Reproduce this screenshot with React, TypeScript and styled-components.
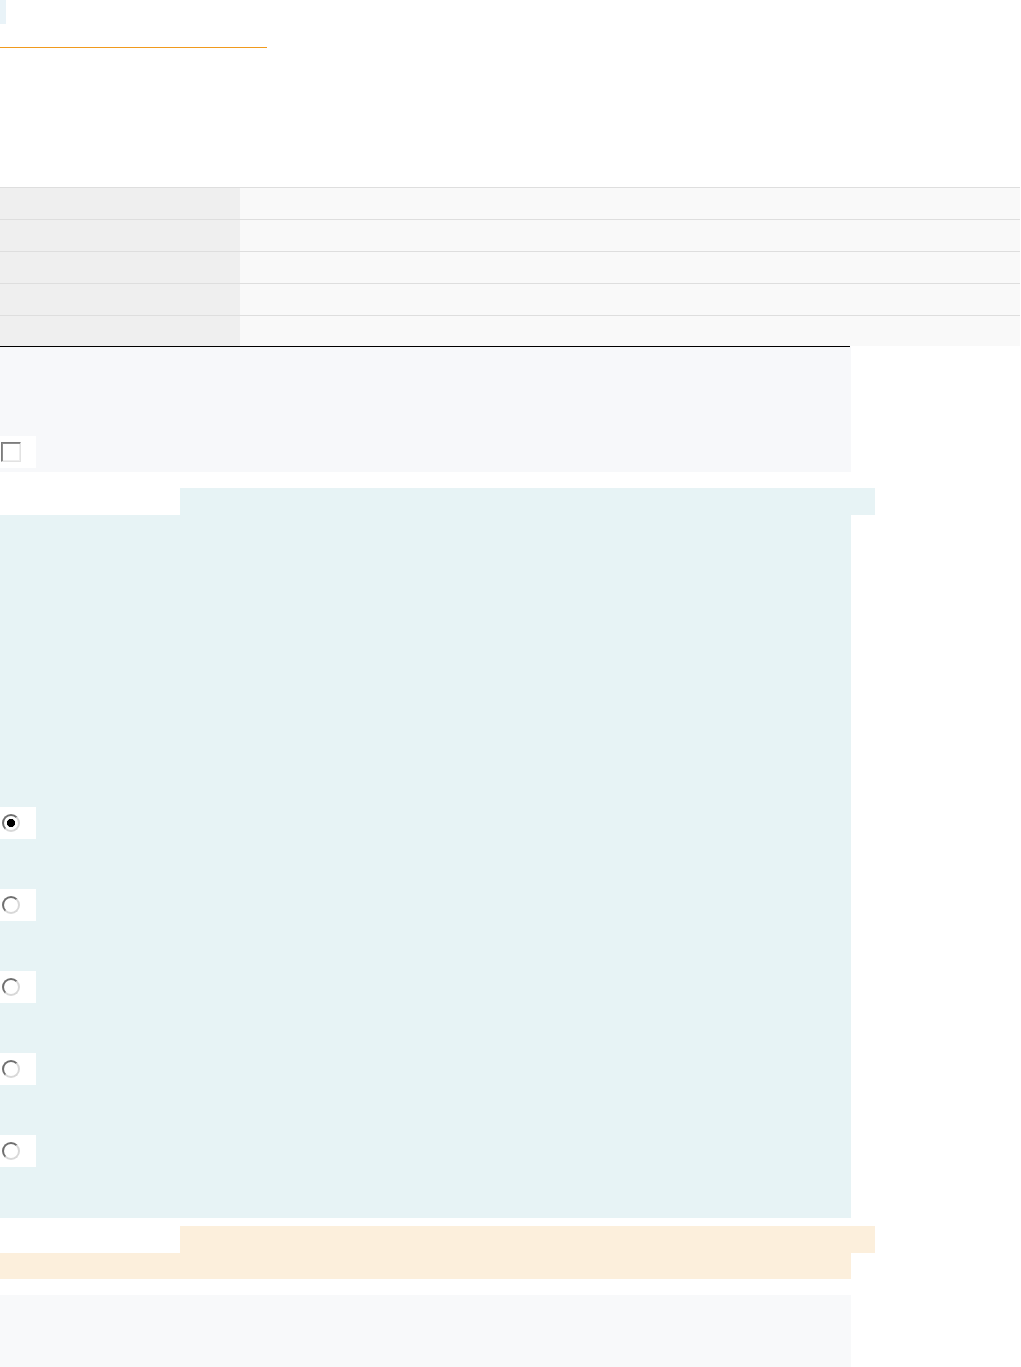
import React from "react";
import styled, { createGlobalStyle } from "styled-components";

const GlobalStyle = createGlobalStyle`
  html, body { margin: 0; padding: 0; background: #ffffff; }
  body { font-family: "Liberation Sans", Arial, sans-serif; font-size: 14px; color: #1d2125; }
  * { box-sizing: border-box; }
`;

const Page = styled.div`
  display: flex;
  flex-direction: column;
  align-items: flex-start;
  width: 1021px;
`;

const SkipLink = styled.a`
  display: block;
  width: 6px;
  height: 24px;
  background: #e9f3f8;
`;

const HeaderRule = styled.div`
  width: 267px;
  height: 1px;
  margin-top: 23px;
  background: #f09a1e;
`;

const SummaryTable = styled.table`
  margin-top: 139px;
  width: 1020px;
  border-collapse: collapse;
  border-spacing: 0;
`;

const Row = styled.tr<{ $last?: boolean }>`
  height: ${(p) => (p.$last ? 30 : 32)}px;
  border-top: 1px solid #dedede;
`;

const HeadCell = styled.th`
  width: 240px;
  padding: 0;
  background: #efefef;
`;

const ValueCell = styled.td`
  padding: 0;
  background: #f9f9f9;
`;

const Divider = styled.div`
  width: 850px;
  height: 1px;
  background: #000000;
`;

const InfoBox = styled.div`
  width: 851px;
  height: 125px;
  padding-top: 89px;
  background: #f7f8fa;
`;

const InputCell = styled.label`
  display: flex;
  align-items: center;
  width: 36px;
  height: 32px;
  padding-left: 1px;
  background: #ffffff;
`;

const FlagBox = styled.input.attrs({ type: "checkbox" })`
  appearance: none;
  margin: 0;
  width: 20px;
  height: 20px;
  background: #ffffff;
  border: 1px solid;
  border-color: #7c7c7c #e2e2e2 #e2e2e2 #7c7c7c;
  box-shadow: inset 1px 1px 0 #8e8e8e, inset -1px -1px 0 #eeeeee;
`;

const Tab = styled.div<{ $tone: string }>`
  width: 695px;
  height: 27px;
  margin-left: 180px;
  margin-top: ${(p) => (p.$tone === "blue" ? 16 : 8)}px;
  background: ${(p) => (p.$tone === "blue" ? "#e7f3f5" : "#fcefdc")};
`;

const Formulation = styled.div`
  width: 851px;
  height: 703px;
  padding-top: 292px;
  display: flex;
  flex-direction: column;
  gap: 50px;
  background: #e7f3f5;
`;

const Choice = styled(InputCell)`
  padding-left: 2px;
`;

const Radio = styled.input.attrs({ type: "radio", name: "answer" })`
  appearance: none;
  margin: 0;
  width: 18px;
  height: 18px;
  border-radius: 50%;
  border: 2px solid;
  border-color: #6f6f6f #d8d8d8 #d8d8d8 #6f6f6f;
  background: #ffffff;
  &:checked {
    background: radial-gradient(circle at center, #000000 0 3.8px, #ffffff 4.4px);
  }
`;

const Outcome = styled.div`
  width: 851px;
  height: 26px;
  background: #fcefdc;
`;

const CommentBox = styled.div`
  width: 851px;
  height: 90px;
  margin-top: 16px;
  background: #f8f9fa;
`;

const rows = [0, 1, 2, 3, 4];
const choices = [true, false, false, false, false];

export default function App() {
  return (
    <>
      <GlobalStyle />
      <Page>
        <SkipLink href="#main" aria-label="Skip to main content" />
        <HeaderRule />
        <SummaryTable>
          <tbody>
            {rows.map((r) => (
              <Row key={r} $last={r === rows.length - 1}>
                <HeadCell scope="row" />
                <ValueCell />
              </Row>
            ))}
          </tbody>
        </SummaryTable>
        <Divider />
        <InfoBox>
          <InputCell aria-label="Flag question">
            <FlagBox />
          </InputCell>
        </InfoBox>
        <Tab $tone="blue" />
        <Formulation>
          {choices.map((c, i) => (
            <Choice key={i} aria-label={`Choice ${i + 1}`}>
              <Radio defaultChecked={c} />
            </Choice>
          ))}
        </Formulation>
        <Tab $tone="orange" />
        <Outcome />
        <CommentBox />
      </Page>
    </>
  );
}
